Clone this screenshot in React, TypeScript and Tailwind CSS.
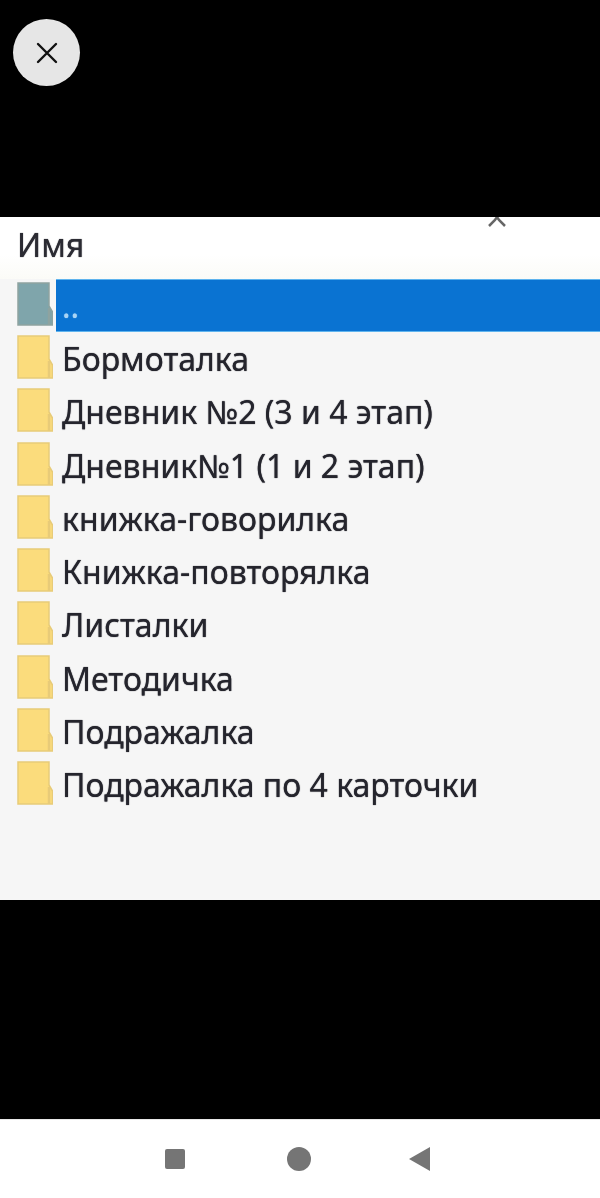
const folders = [
  'Бормоталка',
  'Дневник №2 (3 и 4 этап)',
  'Дневник№1 (1 и 2 этап)',
  'книжка-говорилка',
  'Книжка-повторялка',
  'Листалки',
  'Методичка',
  'Подражалка',
  'Подражалка по 4 карточки',
]

function FolderIcon({ gray = false }: { gray?: boolean }) {
  const fill = gray ? '#7fa5ab' : '#fbdc7c'
  const edge = gray ? '#8ea3a0' : '#e8cb78'
  return (
    <svg width="36" height="44" viewBox="0 0 36 44" className="shrink-0 blur-[0.5px]">
      <path d="M1 1H32V24L35.5 30V43H1Z" fill={fill} stroke={edge} strokeWidth="1.5" />
      <path d="M32 26V43" stroke={edge} strokeWidth="2.5" />
    </svg>
  )
}

export default function App() {
  return (
    <div className="flex h-[1198px] w-[600px] flex-col overflow-hidden bg-black font-['Noto_Sans',sans-serif]">
      <div className="h-[217px] shrink-0 pl-[13px] pt-[19px]">
        <button className="flex h-[67px] w-[67px] items-center justify-center rounded-full bg-[#e6e6e6]">
          <svg width="24" height="24" viewBox="0 0 24 24" fill="none" stroke="#111" strokeWidth="2.4" strokeLinecap="round">
            <path d="M3 3L21 21M21 3L3 21" />
          </svg>
        </button>
      </div>

      <div className="relative flex h-[683px] shrink-0 flex-col bg-[#f6f6f6]">
        <svg width="28" height="12" viewBox="0 0 28 12" fill="none" stroke="#666" strokeWidth="2.5" className="absolute left-[483px] top-0 blur-[0.6px]">
          <path d="M6 9L12 3L14 0M22 9L16 3L14 0" />
        </svg>
        <div className="flex h-[62px] shrink-0 items-center bg-gradient-to-b from-white from-60% to-[#fbfbf7] pb-[6px] pl-[17px] text-[32px] leading-none text-[#2b2b33]">
          <span className="blur-[0.5px] [text-shadow:0_0_1px_#2b2b33]">Имя</span>
        </div>
        <div className="flex h-[53px] shrink-0 items-start pl-[17px]">
          <div className="pt-[3px]">
            <FolderIcon gray />
          </div>
          <div className="ml-[3px] flex h-[53px] flex-1 items-center border-y border-[#5fb4ee] bg-[#0a73d2] pl-[6px] pt-[1px] text-[32px] leading-none text-[#a9d4f5]">
            <span className="blur-[0.5px] [text-shadow:0_0_1px_#a9d4f5]">..</span>
          </div>
        </div>
        <div className="flex flex-col">
          {folders.map((name) => (
            <div key={name} className="flex h-[53.25px] items-start gap-[9px] pl-[17px] pt-[3px]">
              <FolderIcon />
              <span className="mt-[2px] whitespace-nowrap text-[32px] leading-[44px] text-[#25252d] blur-[0.5px] [text-shadow:0_0_1px_#25252d]">{name}</span>
            </div>
          ))}
        </div>
      </div>

      <div className="h-[219px] shrink-0" />

      <div className="flex flex-1 items-center border-t border-[#e8e8e8] bg-white pb-[1px] pl-[165px]">
        <div className="h-[20px] w-[20px] rounded-[2px] bg-[#757575]" />
        <div className="ml-[102px] h-[24px] w-[24px] rounded-full bg-[#757575]" />
        <svg width="22" height="24" viewBox="0 0 22 24" className="ml-[98px]">
          <path d="M0 12L21 0V24Z" fill="#757575" />
        </svg>
      </div>
    </div>
  )
}
